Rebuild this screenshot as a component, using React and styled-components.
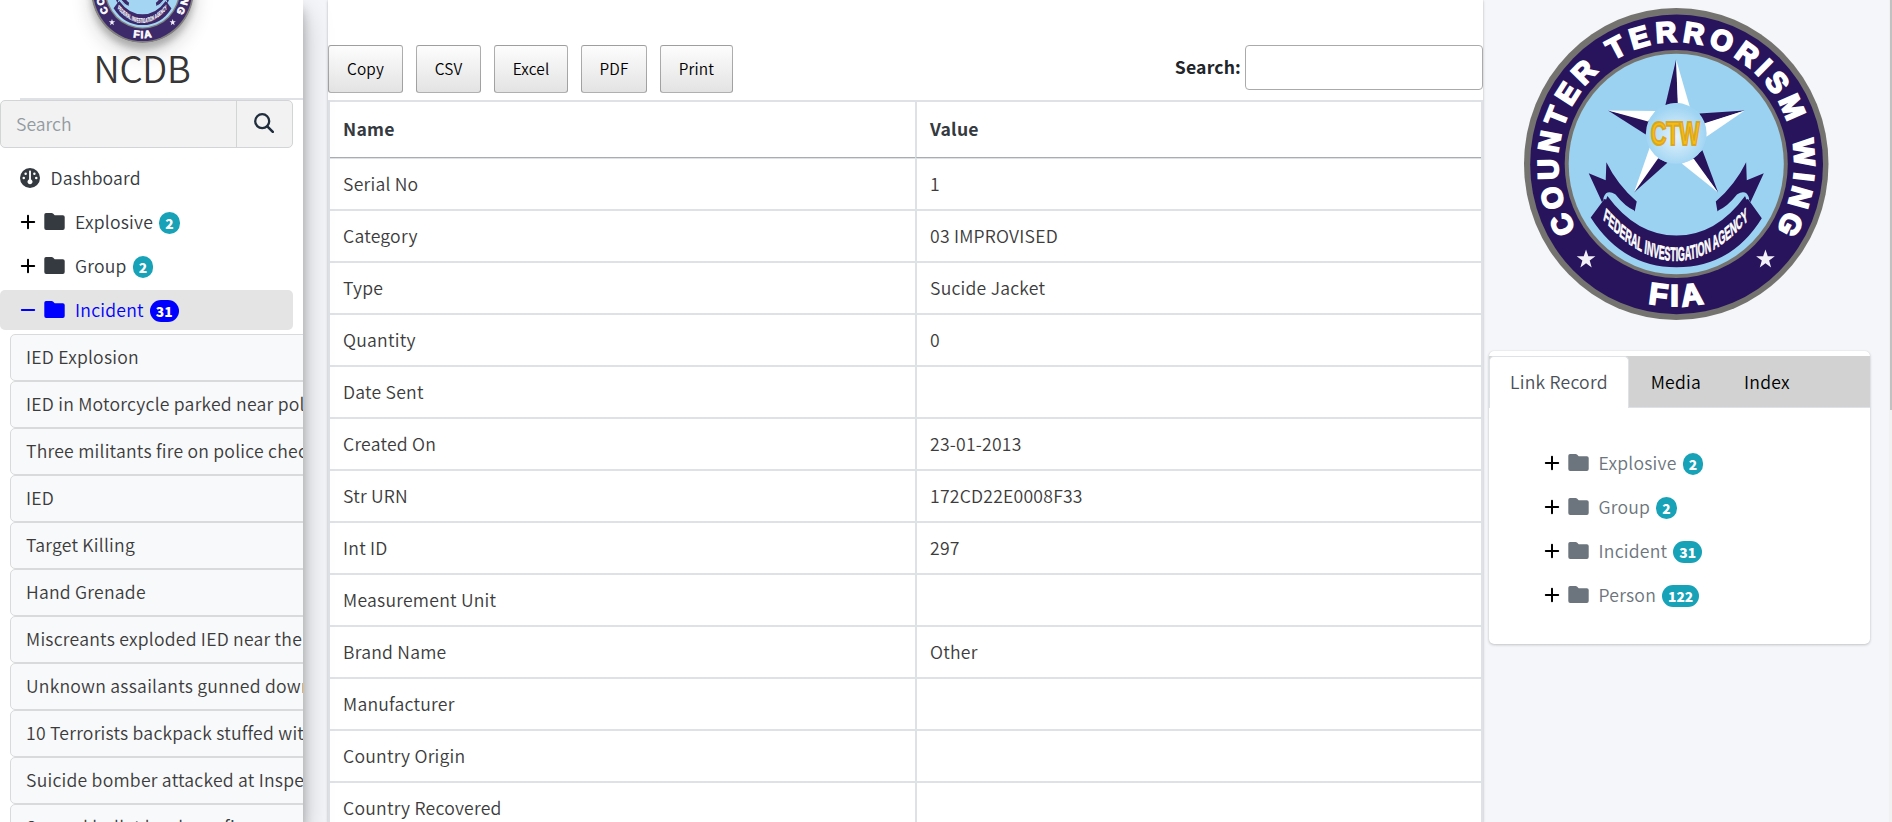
import React from "react";
import styled, { createGlobalStyle } from "styled-components";
import { FaGauge } from "react-icons/fa6";

const GlobalStyle = createGlobalStyle`
  *, *::before, *::after { box-sizing: border-box; }
  body {
    margin: 0;
    overflow: hidden;
    background: #f4f6f9;
    color: #212529;
    font-family: "Noto Sans CJK SC", "Noto Sans", sans-serif;
    font-size: 17.6px;
    font-weight: 350;
    letter-spacing: 0.23px;
    line-height: 30px;
  }
  button, input { font: inherit; letter-spacing: inherit; }
`;

const Page = styled.div`
  display: flex;
  width: 1892px;
  height: 822px;
  overflow: hidden;
  background: #f4f6f9;
`;

/* ---------- sidebar ---------- */

const Sidebar = styled.aside`
  position: relative;
  z-index: 2;
  flex: none;
  width: 303px;
  height: 822px;
  background: #fff;
  box-shadow: 0 14px 28px rgba(0, 0, 0, 0.25), 0 10px 10px rgba(0, 0, 0, 0.22);
`;

const SidebarClip = styled.div`
  display: flex;
  flex-direction: column;
  width: 303px;
  height: 822px;
  overflow: hidden;
`;

const Brand = styled.div`
  display: flex;
  flex: none;
  flex-direction: column;
  align-items: center;
  height: 98px;
  padding-right: 19px;
`;

const BrandLogo = styled.div`
  flex: none;
  width: 103px;
  height: 106px;
  margin-top: -63px;
  border-radius: 50%;
  opacity: 0.9;
  box-shadow: 0 10px 20px rgba(0, 0, 0, 0.19), 0 6px 6px rgba(0, 0, 0, 0.23);
`;

const BrandName = styled.div`
  height: 55px;
  color: rgba(0, 0, 0, 0.8);
  font-size: 36.5px;
  font-weight: 350;
  letter-spacing: -0.3px;
  line-height: 50px;
`;

const Divider = styled.div`
  flex: none;
  height: 2px;
  margin-left: 20px;
  background: #dee2e6;
`;

const SearchBox = styled.div`
  display: flex;
  flex: none;
  width: 293px;
  height: 48px;
  border: 1px solid #d3d4d5;
  border-radius: 5px;
  background: #f2f2f2;
`;

const SearchInput = styled.input`
  width: 236px;
  padding: 0 15px;
  border: 0;
  border-right: 1px solid #d3d4d5;
  background: transparent;
  outline: none;
  letter-spacing: 0;
  &::placeholder { color: #939ba2; opacity: 1; }
`;

const SearchButton = styled.button`
  display: flex;
  flex: 1;
  align-items: center;
  justify-content: center;
  padding: 0 1px 2px 0;
  border: 0;
  background: transparent;
  color: #1f2d3d;
  svg { width: 20px; height: 20px; }
`;

const DashboardRow = styled.div`
  display: flex;
  flex: none;
  align-items: center;
  gap: 10.5px;
  height: 40px;
  margin-top: 10px;
  padding-left: 20px;
  color: #343a40;
  letter-spacing: 0.15px;
  svg { width: 20px; height: 20px; }
`;

const TreeRow = styled.div`
  display: flex;
  flex: none;
  align-items: center;
  width: 293px;
  height: 40px;
  margin-top: 4px;
  padding-left: 20px;
  border-radius: 5px;
  background: ${(p) => (p.$active ? "#e4e4e4" : "transparent")};
  color: ${(p) => (p.$active ? "#0000ff" : p.$muted ? "#6c757d" : "#343a40")};
`;

const Toggle = styled.span`
  display: flex;
  width: 24px;
  color: ${(p) => (p.$active ? "#0000ff" : "#000")};
  svg { width: 16px; height: 16px; }
`;

const FolderSvg = styled.svg`
  width: 21px;
  height: 17px;
  margin: 0 10px 2px 0;
`;

const Count = styled.span`
  height: 22px;
  margin: 2px 0 0 6px;
  padding: 0 6px;
  border-radius: 11px;
  background: ${(p) => (p.$active ? "#0000ff" : "#17a2b8")};
  color: #fff;
  font-size: 13.8px;
  font-weight: 900;
  letter-spacing: 0;
  line-height: 22px;
`;

const IncidentList = styled.div`
  margin: 4px 0 0 10px;
`;

const IncidentItem = styled.div`
  width: 420px;
  height: 47px;
  padding-left: 15px;
  border: 1px solid #d8dadc;
  border-radius: 5px;
  background: #f8f9fa;
  color: #3c3c3c;
  line-height: 43px;
  white-space: nowrap;
`;

/* ---------- record table ---------- */

const RecordCard = styled.main`
  flex: none;
  width: 1155px;
  height: 822px;
  margin-left: 25px;
  padding-top: 45px;
  background: #fff;
  box-shadow: 0 0 1px rgba(0, 0, 0, 0.125), 0 1px 3px rgba(0, 0, 0, 0.2);
`;

const Toolbar = styled.div`
  display: flex;
  justify-content: space-between;
  height: 55px;
  letter-spacing: 0.16px;
`;

const ButtonGroup = styled.div`
  display: flex;
  gap: 13px;
`;

const ExportButton = styled.button`
  width: ${(p) => p.$width}px;
  height: 48px;
  padding: 0 0 2px;
  border: 1px solid rgba(0, 0, 0, 0.3);
  border-radius: 3px;
  background: linear-gradient(to bottom, #fdfdfd 0%, #e3e3e3 100%);
  color: #000;
  font-size: 15.4px;
  line-height: 43px;
`;

const Filter = styled.label`
  display: flex;
  gap: 4px;
  height: 45px;
  font-weight: 700;
  line-height: 44px;
`;

const FilterInput = styled.input`
  width: 238px;
  height: 45px;
  border: 1px solid #aaa;
  border-radius: 4px;
  background: transparent;
`;

const Table = styled.div`
  border: solid #dee2e6;
  border-width: 2px 2px 0 2px;
`;

const TableRow = styled.div`
  display: grid;
  grid-template-columns: 585px 1fr;
  height: ${(p) => (p.$head ? 57 : 52)}px;
  border-bottom: ${(p) => (p.$head ? "1px" : "2px")} solid #dee2e6;
  color: ${(p) => (p.$head ? "#343a40" : "#3c3c3c")};
  font-weight: ${(p) => (p.$head ? 700 : 350)};
`;

const Cell = styled.div`
  padding-left: 13px;
  border-left: ${(p) => (p.$second ? "2px solid #dee2e6" : "0")};
  border-bottom: ${(p) => (p.$head ? "1px solid #a9adb1" : "0")};
  line-height: ${(p) => (p.$head ? 54 : 49)}px;
  white-space: nowrap;
`;

/* ---------- right column ---------- */

const RightColumn = styled.aside`
  display: flex;
  flex: 1;
  flex-direction: column;
  padding-left: 5.5px;
`;

const Emblem = styled.div`
  width: 304.5px;
  height: 312px;
  margin: 8px 0 0 35.5px;
`;

const LinkCard = styled.section`
  width: 381.5px;
  height: 293px;
  margin-top: 31px;
  padding-top: 5px;
  border-radius: 5px;
  background: #fff;
  box-shadow: 0 0 1px rgba(0, 0, 0, 0.125), 0 1px 3px rgba(0, 0, 0, 0.2);
`;

const Tabs = styled.div`
  display: flex;
  height: 52px;
  border-bottom: 1px solid #dee2e6;
  background: #d2d2d2;
`;

const Tab = styled.div`
  height: 52px;
  padding: 0 20.5px;
  border: 1px solid ${(p) => (p.$active ? "#dee2e6" : "transparent")};
  border-bottom: 0;
  border-radius: 5px 5px 0 0;
  background: ${(p) => (p.$active ? "#fff" : "transparent")};
  color: ${(p) => (p.$active ? "#495057" : "#000")};
  line-height: 49px;
  white-space: nowrap;
`;

const LinkTree = styled.div`
  padding: 31px 0 0 35px;
`;

const Scrollbar = styled.div`
  flex: none;
  width: 3px;
  background: #f1f1f1;
`;

const ScrollThumb = styled.div`
  width: 3px;
  height: 410px;
  border-left: 1px solid #f1f1f1;
  background: #c1c1c1;
`;

const Drawing = styled.svg`
  display: block;
  width: 100%;
  height: 100%;
`;

const NAVY = "#27145c";
const SKY = "#9bd2f2";
const STAR = "0,-29 7,-9 28,-9 11,4 17,25 0,12 -17,25 -11,4 -28,-9 -7,-9";

function Seal({ id }) {
  return (
    <Drawing viewBox="73 24 913 935" preserveAspectRatio="none">
      <defs>
        <path id={`${id}-ring`} d="M230 687.6 A355 366 0 1 1 829 687.6" />
        <path id={`${id}-foot`} d="M320 859 A418 427 0 0 0 740 859" />
        <path id={`${id}-ribbon`} d="M655 648 Q1150 916 1640 648" />
        <radialGradient id={`${id}-ball`} cx="0.5" cy="0.55" r="0.5">
          <stop offset="0" stopColor="#e4f3fc" />
          <stop offset="1" stopColor="#9fd4f3" />
        </radialGradient>
      </defs>
      <ellipse cx="529.5" cy="491.5" rx="456.5" ry="467.5" fill="#74736f" />
      <ellipse cx="530.5" cy="492.5" rx="439" ry="449" fill={NAVY} />
      <ellipse cx="529.5" cy="491.5" rx="334.5" ry="341.5" fill="#74736f" />
      <ellipse cx="529.5" cy="491.5" rx="322.5" ry="330.5" fill={SKY} />

      <g fill="#fff" stroke="#fff" strokeWidth="6" fontFamily="'Liberation Sans', sans-serif" fontWeight="700">
        <text fontSize="86" letterSpacing="15.4">
          <textPath href={`#${id}-ring`}>COUNTER TERRORISM WING</textPath>
        </text>
        <text fontSize="91" letterSpacing="11" textAnchor="middle">
          <textPath href={`#${id}-foot`} startOffset="51%">FIA</textPath>
        </text>
      </g>
      <polygon points={STAR} transform="translate(259 777)" fill="#f3f0f8" />
      <polygon points={STAR} transform="translate(797 777)" fill="#f3f0f8" />

      <g fill={NAVY}>
        <path d="M529 178 L497 315 L535 308Z" />
        <path d="M325 331 L450 360 L438 403Z" />
        <path d="M735 331 L599 340 L612 372Z" />
        <path d="M403 577 L470 472 L503 488Z" />
        <path d="M655 577 L608 450 L578 476Z" />
      </g>
      <g fill="#fff">
        <path d="M529 178 L534 308 L570 320Z" />
        <path d="M325 331 L467 333 L445 364Z" />
        <path d="M735 331 L612 370 L620 410Z" />
        <path d="M403 577 L450 442 L477 472Z" />
        <path d="M655 577 L582 476 L546 490Z" />
      </g>
      <circle cx="529.5" cy="400" r="91" fill={`url(#${id}-ball)`} />
      <text
        transform="translate(526 436) scale(0.64 1)"
        textAnchor="middle"
        fontFamily="'Liberation Sans', sans-serif"
        fontWeight="700"
        fontSize="102"
        letterSpacing="-1"
        fill="#f5bd12"
        stroke="#dda520"
        strokeWidth="6"
      >
        CTW
      </text>

      <g fill={NAVY}>
        <path d="M267 519 L318 540 L320 486 Q352 552 411 604 L405 633 Q372 628 345 588 Q326 572 316 590 L307 606Z" />
        <path d="M792 519 L741 540 L739 486 Q707 552 648 604 L653 633 Q687 628 714 588 Q733 572 743 590 L752 606Z" />
        <path d="M273 652 L322 586 Q410 706 530 706 Q650 706 737 586 L786 654 Q695 801 530 801 Q368 801 273 652Z" />
      </g>
      <g fill="none" stroke={SKY} strokeWidth="9">
        <path d="M315 597 Q321 571 344 586 Q374 624 402 635" />
        <path d="M744 597 Q738 571 715 586 Q685 624 657 635" />
      </g>
      <text
        transform="scale(0.46 1)"
        fontFamily="'Liberation Sans', sans-serif"
        fontWeight="700"
        fontSize="58"
        letterSpacing="-0.3"
        fill="#fff"
        stroke="#fff"
        strokeWidth="2"
        textAnchor="middle"
      >
        <textPath href={`#${id}-ribbon`} startOffset="50%">FEDERAL INVESTIGATION AGENCY</textPath>
      </text>
    </Drawing>
  );
}

function ToggleMark({ open }) {
  return (
    <svg viewBox="0 0 16 16" stroke="currentColor" strokeWidth="2" strokeLinecap="round">
      <path d={open ? "M1.8 8H14.2" : "M1.8 8H14.2M8 1.8V14.2"} />
    </svg>
  );
}

function SearchMark() {
  return (
    <svg viewBox="0 0 20 20" fill="none" stroke="currentColor" strokeWidth="2.3" strokeLinecap="round">
      <circle cx="8.2" cy="8.2" r="7" />
      <path d="M13.3 13.3L18.8 18.8" strokeWidth="2.6" />
    </svg>
  );
}

function Branch({ label, count, active, muted }) {
  return (
    <TreeRow $active={active} $muted={muted}>
      <Toggle $active={active}><ToggleMark open={active} /></Toggle>
      <FolderSvg viewBox="0 0 21 17" fill="currentColor">
        <path d="M2 0H7.6Q8.4 0 9 .6L10.7 2.2H18.8Q20.7 2.2 20.7 4.1V15Q20.7 17 18.8 17H2.2Q.3 17 .3 15V1.8Q.3 0 2 0Z" />
      </FolderSvg>
      {label}
      <Count $active={active}>{count}</Count>
    </TreeRow>
  );
}

const incidents = [
  "IED Explosion",
  "IED in Motorcycle parked near police",
  "Three militants fire on police check post",
  "IED",
  "Target Killing",
  "Hand Grenade",
  "Miscreants exploded IED near the",
  "Unknown assailants gunned down",
  "10 Terrorists backpack stuffed with",
  "Suicide bomber attacked at Inspector",
  "Second bullet has been fire around",
];

const record = [
  ["Serial No", "1"],
  ["Category", "03 IMPROVISED"],
  ["Type", "Sucide Jacket"],
  ["Quantity", "0"],
  ["Date Sent", ""],
  ["Created On", "23-01-2013"],
  ["Str URN", "172CD22E0008F33"],
  ["Int ID", "297"],
  ["Measurement Unit", ""],
  ["Brand Name", "Other"],
  ["Manufacturer", ""],
  ["Country Origin", ""],
  ["Country Recovered", ""],
];

const exportsList = [
  ["Copy", 75],
  ["CSV", 65],
  ["Excel", 74],
  ["PDF", 66],
  ["Print", 73],
];

const links = [
  ["Explosive", 2],
  ["Group", 2],
  ["Incident", 31],
  ["Person", 122],
];

export default function App() {
  return (
    <>
      <GlobalStyle />
      <Page>
        <Sidebar>
          <SidebarClip>
            <Brand>
              <BrandLogo><Seal id="brand" /></BrandLogo>
              <BrandName>NCDB</BrandName>
            </Brand>
            <Divider />
            <SearchBox>
              <SearchInput placeholder="Search" />
              <SearchButton><SearchMark /></SearchButton>
            </SearchBox>
            <DashboardRow><FaGauge />Dashboard</DashboardRow>
            <Branch label="Explosive" count={2} />
            <Branch label="Group" count={2} />
            <Branch label="Incident" count={31} active />
            <IncidentList>
              {incidents.map((t) => <IncidentItem key={t}>{t}</IncidentItem>)}
            </IncidentList>
          </SidebarClip>
        </Sidebar>

        <RecordCard>
          <Toolbar>
            <ButtonGroup>
              {exportsList.map(([t, w]) => <ExportButton key={t} $width={w}>{t}</ExportButton>)}
            </ButtonGroup>
            <Filter>Search:<FilterInput /></Filter>
          </Toolbar>
          <Table>
            <TableRow $head>
              <Cell $head>Name</Cell>
              <Cell $head $second>Value</Cell>
            </TableRow>
            {record.map(([name, value]) => (
              <TableRow key={name}>
                <Cell>{name}</Cell>
                <Cell $second>{value}</Cell>
              </TableRow>
            ))}
          </Table>
        </RecordCard>

        <RightColumn>
          <Emblem><Seal id="emblem" /></Emblem>
          <LinkCard>
            <Tabs>
              <Tab $active>Link Record</Tab>
              <Tab>Media</Tab>
              <Tab>Index</Tab>
            </Tabs>
            <LinkTree>
              {links.map(([label, count]) => <Branch key={label} label={label} count={count} muted />)}
            </LinkTree>
          </LinkCard>
        </RightColumn>
        <Scrollbar><ScrollThumb /></Scrollbar>
      </Page>
    </>
  );
}
